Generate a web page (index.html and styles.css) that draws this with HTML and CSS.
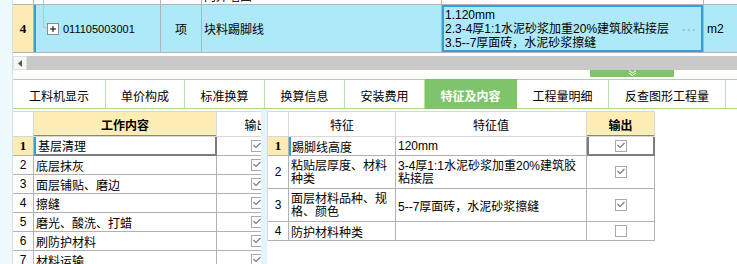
FILE: index.html
```
<!DOCTYPE html>
<html>
<head>
  <meta charset="utf-8" />
  <title>特征及内容</title>
  <link rel="stylesheet" href="styles.css">
</head>
<body>
  <div id="wrap">
    <div class="grid">
      <div class="row prev">
        <div class="c rn"></div>
        <div class="c code"><span class="tree tree-full"></span></div>
        <div class="c unit"></div>
        <div class="c name"><span class="cut">内外墙面</span></div>
        <div class="c desc"></div>
        <div class="c u2"></div>
      </div>
      <div class="row cur">
        <div class="c rn">4</div>
        <div class="c code">
          <span class="tree"></span>
          <svg class="plus" width="12" height="12" viewBox="0 0 12 12"><rect x="0.5" y="0.5" width="11" height="11" fill="#fff" stroke="#8c8c8c"/><path d="M3 6h6M6 3v6" stroke="#000" stroke-width="1"/></svg>
          <span class="code-txt">011105003001</span>
        </div>
        <div class="c unit">项</div>
        <div class="c name">块料踢脚线</div>
        <div class="c desc">
          <div class="desc-txt">1.120mm<br>2.3-4厚1:1水泥砂浆加重20%建筑胶粘接层<br>3.5--7厚面砖，水泥砂浆擦缝</div>
          <span class="more">···</span>
        </div>
        <div class="c u2">m2</div>
      </div>
    </div>

    <div class="hscroll">
      <div class="sbtn"><svg width="5" height="7" viewBox="0 0 5 7"><path d="M4 0v7L0 3.5z" fill="#555"/></svg></div>
    </div>
    <div class="grip-row">
      <div class="grip"><svg width="9" height="6" viewBox="0 0 9 6"><path d="M1 0.5l3.5 2.5 3.5-2.5M1 3l3.5 2.5 3.5-2.5" fill="none" stroke="#fff" stroke-width="1"/></svg></div>
    </div>

    <div class="tabs">
      <div class="tab" style="width:93px">工料机显示</div>
      <div class="tab" style="width:79px">单价构成</div>
      <div class="tab" style="width:80px">标准换算</div>
      <div class="tab" style="width:80px">换算信息</div>
      <div class="tab" style="width:80px">安装费用</div>
      <div class="tab on" style="width:92px">特征及内容</div>
      <div class="tab" style="width:92px">工程量明细</div>
      <div class="tab" style="width:117px">反查图形工程量</div>
      <div class="tab last"></div>
    </div>

    <div class="panes">
      <div class="pane-l">
        <div class="t work">
          <div class="r h">
            <div class="c w-rn"></div>
            <div class="c w-txt hcur ctr">工作内容</div>
            <div class="c w-out ctr">输出</div>
          </div>
          <div class="r">
            <div class="c w-rn rn-on">1</div>
            <div class="c w-txt sel-l">基层清理</div>
            <div class="c w-out ctr"><svg class="cb" width="12" height="12" viewBox="0 0 12 12"><rect x="0.5" y="0.5" width="11" height="11" fill="#fff" stroke="#a8a8a8"/><path d="M2.5 5l2.5 2.5 4.5-4.5" fill="none" stroke="#767a88" stroke-width="1.2"/></svg></div>
          </div>
          <div class="r">
            <div class="c w-rn">2</div>
            <div class="c w-txt">底层抹灰</div>
            <div class="c w-out ctr"><svg class="cb" width="12" height="12" viewBox="0 0 12 12"><rect x="0.5" y="0.5" width="11" height="11" fill="#fff" stroke="#a8a8a8"/><path d="M2.5 5l2.5 2.5 4.5-4.5" fill="none" stroke="#767a88" stroke-width="1.2"/></svg></div>
          </div>
          <div class="r">
            <div class="c w-rn">3</div>
            <div class="c w-txt">面层铺贴、磨边</div>
            <div class="c w-out ctr"><svg class="cb" width="12" height="12" viewBox="0 0 12 12"><rect x="0.5" y="0.5" width="11" height="11" fill="#fff" stroke="#a8a8a8"/><path d="M2.5 5l2.5 2.5 4.5-4.5" fill="none" stroke="#767a88" stroke-width="1.2"/></svg></div>
          </div>
          <div class="r">
            <div class="c w-rn">4</div>
            <div class="c w-txt">擦缝</div>
            <div class="c w-out ctr"><svg class="cb" width="12" height="12" viewBox="0 0 12 12"><rect x="0.5" y="0.5" width="11" height="11" fill="#fff" stroke="#a8a8a8"/><path d="M2.5 5l2.5 2.5 4.5-4.5" fill="none" stroke="#767a88" stroke-width="1.2"/></svg></div>
          </div>
          <div class="r">
            <div class="c w-rn">5</div>
            <div class="c w-txt">磨光、酸洗、打蜡</div>
            <div class="c w-out ctr"><svg class="cb" width="12" height="12" viewBox="0 0 12 12"><rect x="0.5" y="0.5" width="11" height="11" fill="#fff" stroke="#a8a8a8"/><path d="M2.5 5l2.5 2.5 4.5-4.5" fill="none" stroke="#767a88" stroke-width="1.2"/></svg></div>
          </div>
          <div class="r">
            <div class="c w-rn">6</div>
            <div class="c w-txt">刷防护材料</div>
            <div class="c w-out ctr"><svg class="cb" width="12" height="12" viewBox="0 0 12 12"><rect x="0.5" y="0.5" width="11" height="11" fill="#fff" stroke="#a8a8a8"/><path d="M2.5 5l2.5 2.5 4.5-4.5" fill="none" stroke="#767a88" stroke-width="1.2"/></svg></div>
          </div>
          <div class="r">
            <div class="c w-rn">7</div>
            <div class="c w-txt">材料运输</div>
            <div class="c w-out ctr"><svg class="cb" width="12" height="12" viewBox="0 0 12 12"><rect x="0.5" y="0.5" width="11" height="11" fill="#fff" stroke="#a8a8a8"/><path d="M2.5 5l2.5 2.5 4.5-4.5" fill="none" stroke="#767a88" stroke-width="1.2"/></svg></div>
          </div>
        </div>
      </div>

      <div class="split"></div>

      <div class="pane-r">
        <div class="t feat">
          <div class="r h">
            <div class="c f-rn"></div>
            <div class="c f-name ctr">特征</div>
            <div class="c f-val ctr">特征值</div>
            <div class="c f-out hcur ctr">输出</div>
          </div>
          <div class="r">
            <div class="c f-rn rn-on">1</div>
            <div class="c f-name row-on">踢脚线高度</div>
            <div class="c f-val">120mm</div>
            <div class="c f-out ctr sel-r"><svg class="cb" width="12" height="12" viewBox="0 0 12 12"><rect x="0.5" y="0.5" width="11" height="11" fill="#fff" stroke="#a8a8a8"/><path d="M2.5 5l2.5 2.5 4.5-4.5" fill="none" stroke="#767a88" stroke-width="1.2"/></svg></div>
          </div>
          <div class="r tall">
            <div class="c f-rn">2</div>
            <div class="c f-name two">粘贴层厚度、材料<br>种类</div>
            <div class="c f-val two">3-4厚1:1水泥砂浆加重20%建筑胶<br>粘接层</div>
            <div class="c f-out ctr"><svg class="cb" width="12" height="12" viewBox="0 0 12 12"><rect x="0.5" y="0.5" width="11" height="11" fill="#fff" stroke="#a8a8a8"/><path d="M2.5 5l2.5 2.5 4.5-4.5" fill="none" stroke="#767a88" stroke-width="1.2"/></svg></div>
          </div>
          <div class="r tall">
            <div class="c f-rn">3</div>
            <div class="c f-name two">面层材料品种、规<br>格、颜色</div>
            <div class="c f-val">5--7厚面砖，水泥砂浆擦缝</div>
            <div class="c f-out ctr"><svg class="cb" width="12" height="12" viewBox="0 0 12 12"><rect x="0.5" y="0.5" width="11" height="11" fill="#fff" stroke="#a8a8a8"/><path d="M2.5 5l2.5 2.5 4.5-4.5" fill="none" stroke="#767a88" stroke-width="1.2"/></svg></div>
          </div>
          <div class="r">
            <div class="c f-rn">4</div>
            <div class="c f-name">防护材料种类</div>
            <div class="c f-val"></div>
            <div class="c f-out ctr"><svg class="cb" width="12" height="12" viewBox="0 0 12 12"><rect x="0.5" y="0.5" width="11" height="11" fill="#fff" stroke="#a8a8a8"/></svg></div>
          </div>
        </div>
      </div>
    </div>
  </div>
</body>
</html>
```

FILE: styles.css
```
html, body {
  margin: 0;
}

body {
  width: 737px;
  height: 264px;
  overflow: hidden;
  background: #effafe;
  font-family: "Liberation Sans", "Noto Sans CJK SC", sans-serif;
  font-size: 12px;
  color: #000;
}

#wrap {
  margin-left: 12px;
  height: 264px;
  border-left: 1px solid #d3e2e8;
  background: #fff;
}

/* top grid */
.grid .row {
  display: flex;
  border-bottom: 1px solid #b4b4b4;
}

.grid .prev {
  height: 4px;
}

.grid .cur {
  height: 47px;
  background: #aee9f9;
}

.grid .c {
  box-sizing: border-box;
  display: flex;
  align-items: center;
  overflow: hidden;
  flex-shrink: 0;
  border-right: 1px solid #b4b4b4;
  white-space: nowrap;
}

.grid .rn {
  width: 21px;
  justify-content: center;
}

.cur .rn {
  background: #fdeab4;
  font-family: "Liberation Serif", serif;
  font-weight: bold;
  font-size: 13px;
}

.grid .code {
  width: 127px;
  padding-left: 7px;
  border-left: 2px solid transparent;
}

.cur .code {
  border-left-color: #2ea2d3;
}

.tree {
  align-self: flex-start;
  width: 3px;
  height: 22px;
  border-left: 1px solid #c2c2c2;
  border-bottom: 1px solid #c2c2c2;
}

.tree-full {
  height: 4px;
  border-bottom: none;
}

.plus {
  display: block;
  flex-shrink: 0;
}

.code-txt {
  margin-left: 4px;
  font-size: 11px;
}

.grid .unit {
  width: 41px;
  justify-content: center;
}

.grid .name {
  width: 240px;
  padding-left: 2px;
}

.cut {
  display: block;
  margin-top: -10px;
  line-height: 12px;
}

.grid .desc {
  width: 262px;
  align-items: flex-start;
}

.cur .desc {
  padding: 3px 6px 0 3px;
  box-shadow: inset 0 0 0 2px #2ea2d3;
}

.desc-txt {
  line-height: 14px;
}

.more {
  align-self: center;
  margin-left: auto;
  color: #8fc4e1;
  font-weight: bold;
  letter-spacing: 1px;
}

.grid .u2 {
  flex: 1;
  padding-left: 3px;
  border-right: none;
}

/* scrollbar + splitter grip */
.hscroll {
  margin-top: 3px;
  height: 14px;
  background: #c9c9c9;
}

.sbtn {
  box-sizing: border-box;
  width: 14px;
  height: 14px;
  background: #f7f7f7;
  border: 1px solid #e0e0e0;
  display: flex;
  align-items: center;
  justify-content: center;
}

.sbtn svg {
  display: block;
}

.grip-row {
  height: 9px;
}

.grip {
  width: 84px;
  height: 7px;
  margin-left: 577px;
  background: #80c46a;
  display: flex;
  justify-content: center;
}

.grip svg {
  display: block;
}

/* tabs */
.tabs {
  display: flex;
  height: 28px;
  border-top: 1px solid #a9dc90;
  border-bottom: 1px solid #a9dc90;
  background: #fff;
}

.tab {
  box-sizing: border-box;
  flex-shrink: 0;
  display: flex;
  align-items: center;
  justify-content: center;
  padding-top: 2px;
  border-right: 1px solid #b8e3a4;
  white-space: nowrap;
}

.tab.on {
  margin: -1px 0;
  background: #7fc46a;
  border-right-color: #7fc46a;
  color: #fff;
  font-weight: bold;
}

.tab.last {
  flex: 1;
  border-right: none;
}

/* lower panes */
.panes {
  display: flex;
  height: 155px;
}

.pane-l {
  width: 248px;
  overflow: hidden;
  background: #fff;
}

.split {
  width: 6px;
  background: #e5f4fa;
}

.pane-r {
  flex: 1;
  background: #fff;
}

.t {
  margin-top: 2px;
}

.t .r {
  display: flex;
}

.t .c {
  box-sizing: border-box;
  flex-shrink: 0;
  height: 19px;
  display: flex;
  align-items: center;
  padding-left: 2px;
  border-right: 1px solid #b2b2b2;
  border-bottom: 1px solid #b2b2b2;
  white-space: nowrap;
}

.t .h .c {
  height: 26px;
  border-top: 1px solid #d8d8d8;
  border-right-color: #d8d8d8;
  border-bottom-color: #d8d8d8;
}

.t .tall .c {
  height: 33px;
}

.t .ctr {
  justify-content: center;
  padding-left: 0;
}

.t .two {
  line-height: 13px;
  padding-top: 2px;
}

.t .hcur {
  background: #feedb5;
  font-weight: bold;
  border-bottom-color: #2ea2d3;
  box-shadow: inset 0 -1px 0 #2ea2d3;
}

.w-rn,
.f-rn {
  width: 21px;
  justify-content: center;
  padding-left: 0 !important;
}

.rn-on {
  background: #fdeab4;
  font-family: "Liberation Serif", serif;
  font-weight: bold;
  font-size: 13px;
}

.w-txt {
  width: 183px;
}

.w-out {
  width: 80px;
}

.sel-l {
  border-left: 2px solid #2ea2d3;
  border-right: 2px solid #7d7d7d !important;
  border-bottom: 2px solid #7d7d7d !important;
}

.feat {
  border-left: 1px solid #d8d8d8;
}

.f-name {
  width: 107px;
}

.row-on {
  border-left: 2px solid #2ea2d3;
  padding-left: 1px !important;
}

.f-val {
  width: 191px;
}

.f-out {
  width: 68px;
}

.sel-r {
  border-left: 2px solid #7d7d7d;
  border-right: 2px solid #7d7d7d !important;
  border-bottom: 2px solid #7d7d7d !important;
}

.cb {
  display: block;
}
```
